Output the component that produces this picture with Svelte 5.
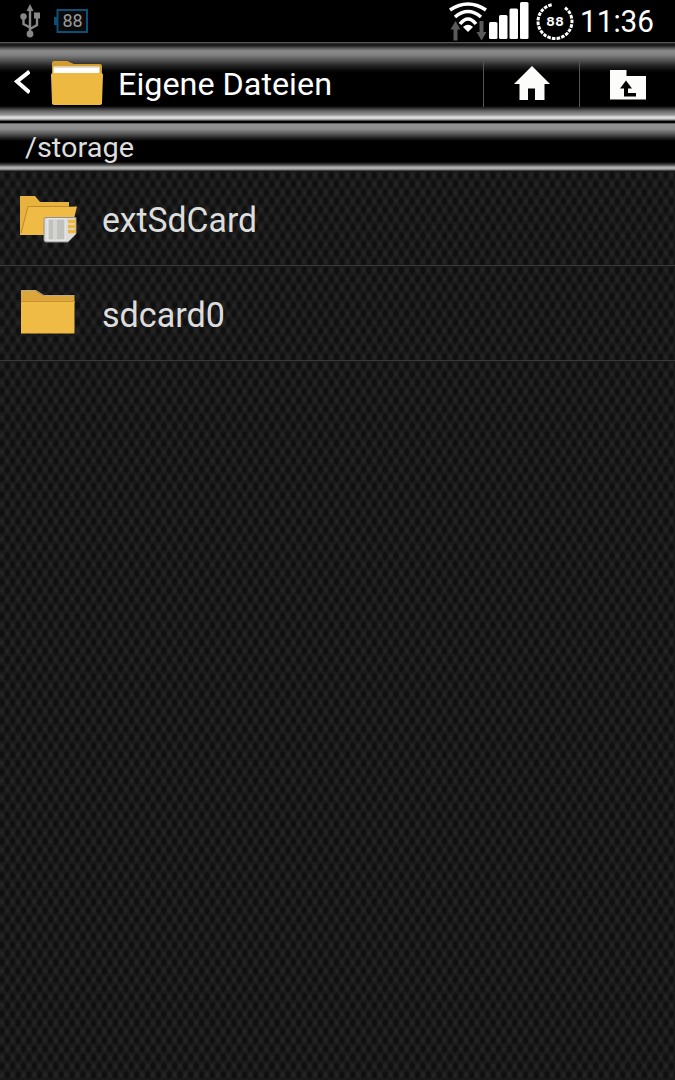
<script lang="ts">
	const path = '/storage';
	const time = '11:36';
	const battery = 88;

	const entries = [
		{ name: 'extSdCard', kind: 'external' },
		{ name: 'sdcard0', kind: 'folder' }
	];

	// 20 dashes, then the open gap at the top right of the ring
	const ringDashes = Array(19).fill('3.3 1.1').join(' ') + ' 3.3 13.1';
</script>

<div class="screen">
	<div class="status-bar">
		<svg class="usb" width="20" height="34" viewBox="0 0 20 34" aria-hidden="true">
			<g fill="none" stroke="#888" stroke-width="2.400">
				<path d="M10 7v23M10 23.500l-6.500-3.500v-7M10 25l7-4v-7" />
			</g>
			<g fill="#888">
				<path d="M10 0l3.500 7h-7z" />
				<circle cx="3.500" cy="12.500" r="3.200" />
				<rect x="14" y="8.500" width="6" height="6" />
				<circle cx="10" cy="30" r="3.400" />
			</g>
		</svg>
		<svg class="cell" width="34" height="24" viewBox="0 0 34 24" aria-hidden="true">
			<rect x="3.500" y="1" width="29.500" height="22" fill="#0a0a0a" stroke="#0c4e76" stroke-width="2" />
			<rect y="8" width="3" height="8" fill="#0c4e76" />
			<text x="18.500" y="18" text-anchor="middle" textLength="20">{battery}</text>
		</svg>

		<div class="status-right">
			<svg width="38" height="42" viewBox="0 0 38 42" aria-hidden="true">
				<g fill="none" stroke="#fff" stroke-width="3.600">
					<path d="M1 10q18-12 36 0" />
					<path d="M6 17q13-11 26 0" />
					<path d="M11 24q8-10 16 0" />
				</g>
				<path d="M14 27q5-4.500 10 0L19 32z" fill="#fff" />
				<path d="M6.500 21l5 8.500H8.500V40.500h-4V29.500h-3z" fill="#5a5a5a" />
				<path d="M32.500 40.500l-5-8.500h3V21h4v11h3z" fill="#5a5a5a" />
			</svg>
			<svg width="40" height="42" viewBox="0 0 40 42" fill="#fff" aria-hidden="true">
				<rect x="0" y="22" width="8.500" height="17" rx="1.500" />
				<rect x="10" y="15" width="8.500" height="24" rx="1.500" />
				<rect x="20.500" y="8.500" width="8.500" height="30.500" rx="1.500" />
				<rect x="31" y="2" width="8.500" height="37" rx="1.500" />
			</svg>
			<svg class="ring" width="38" height="42" viewBox="0 0 38 42" aria-hidden="true">
				<circle
					cx="19"
					cy="21.500"
					r="17"
					fill="none"
					stroke="#fff"
					stroke-width="3"
					pathLength="100"
					stroke-dasharray={ringDashes}
					transform="rotate(-54 19 21.500)"
				/>
				<text x="19" y="25.500" text-anchor="middle" textLength="18" lengthAdjust="spacingAndGlyphs">{battery}</text>
			</svg>
			<svg class="clock" width="76" height="42" viewBox="0 0 76 42">
				<text x="0" y="31.500" textLength="74" lengthAdjust="spacingAndGlyphs">{time}</text>
			</svg>
		</div>
	</div>

	<header class="title-bar">
		<button class="back" type="button" aria-label="Zurück">
			<svg width="16" height="26" viewBox="0 0 16 26" fill="none" stroke="#fff" stroke-width="4">
				<path d="M15.500 2.500L3 12.500 15.500 23.500" />
			</svg>
		</button>
		<svg class="app-icon" width="54" height="46" viewBox="0 0 54 46" aria-hidden="true">
			<path d="M2 44V3q0-2 2-2h13l7 3h26q2 0 2 2v38z" fill="#d39c2e" />
			<rect x="3.500" y="6.500" width="46" height="10" fill="#fff" />
			<path d="M3.500 7.500h46" stroke="#ddd" />
			<path d="M1 15q0-2 2-2h48q2 0 2 2l-1 28q0 2-2 2H4q-2 0-2-2z" fill="#edb941" />
		</svg>
		<svg class="title" width="220" height="44" viewBox="0 0 220 44">
			<text x="0" y="31.500" textLength="214" lengthAdjust="spacingAndGlyphs">Eigene Dateien</text>
		</svg>
		<button class="action" type="button" aria-label="Home">
			<svg width="38" height="36" viewBox="0 0 38 36" fill="#fcfcfa">
				<path d="M19 1L37 19H31.500V35H22V23.500H15V35H6.500V19H1z" />
			</svg>
		</button>
		<button class="action" type="button" aria-label="Up">
			<svg width="38" height="30" viewBox="0 0 38 30">
				<path d="M1 0h16.500v6H37v23.500H1z" fill="#fcfcfa" />
				<path d="M17 10.500l6 8h-4V23h8v3.500H15v-8h-4z" fill="#000" />
			</svg>
		</button>
	</header>

	<div class="path-bar">
		<svg width="120" height="46" viewBox="0 0 120 46">
			<text x="0" y="36" textLength="109" lengthAdjust="spacingAndGlyphs">{path}</text>
		</svg>
	</div>

	<ul class="files">
		{#each entries as entry (entry.name)}
			<li>
				{#if entry.kind === 'external'}
					<svg width="60" height="50" viewBox="0 0 60 50" aria-hidden="true">
						<path d="M0 40V1h15l5 6h29v33z" fill="#e8b23e" />
						<path d="M1 40L8 12h31l18-.5L50 40z" fill="#efbb44" />
						<path d="M1 38L8 11.500h41" fill="none" stroke="#bd8b2a" />
						<path d="M26 22.500h30V39l-8 8H26q-2 0-2-2V24.500q0-2 2-2z" fill="#dcdcdc" stroke="#909090" />
						<rect x="28" y="24" width="17" height="21" fill="#c0c0bc" stroke="#eee" />
						<path d="M35 25v19" stroke="#d4d4d0" stroke-width="4" />
						<path d="M48 26.500h8M48 31.500h8M48 36.500h8" stroke="#efb63c" stroke-width="3.500" />
					</svg>
				{:else}
					<svg width="60" height="50" viewBox="0 0 60 50" aria-hidden="true">
						<path d="M1 12V1h15l8 5h30.500v7z" fill="#dca63a" />
						<path d="M1 .5h15l8 5h30.500" fill="none" stroke="#b8a98a" />
						<rect x="1" y="11.500" width="53.500" height="32" fill="#efbb44" />
						<path d="M1 11.500h53.500" stroke="#c4922f" />
					</svg>
				{/if}
				<svg class="name" width="200" height="50" viewBox="0 0 200 50">
					<text
						x="0"
						y="35"
						textLength={entry.kind === 'external' ? 155 : 123}
						lengthAdjust="spacingAndGlyphs">{entry.name}</text
					>
				</svg>
			</li>
		{/each}
	</ul>
</div>

<style>
	:global(body) {
		background: #000;
	}

	.screen {
		height: 1080px;
		display: flex;
		flex-direction: column;
		overflow: hidden;
		font-family: Roboto, sans-serif;
		background: #000;
	}

	svg {
		display: block;
		flex-shrink: 0;
	}

	/* Status bar */
	.status-bar {
		height: 42px;
		display: flex;
		align-items: flex-start;
		padding: 0 19px 0 20px;
	}
	.usb {
		margin-top: 4px;
	}
	.cell {
		margin: 9px 0 0 14px;
	}
	.cell text {
		font: 18px Roboto, sans-serif;
		fill: #999;
	}
	.status-right {
		display: flex;
		margin-left: auto;
	}
	.status-right svg + svg {
		margin-left: 2px;
	}
	.status-right .ring {
		margin-left: 7px;
	}
	.status-right .clock {
		margin-left: 6px;
	}
	.ring text {
		font: 700 13px 'DejaVu Sans Mono', monospace;
		fill: #fff;
	}
	.clock text {
		font: 31px Roboto, sans-serif;
		fill: #fff;
	}

	/* Title bar */
	.title-bar {
		height: 79px;
		box-sizing: border-box;
		display: flex;
		align-items: flex-start;
		background: linear-gradient(
			#666 0,
			#444 1px,
			#111 2px,
			#222 4px,
			#555 6px,
			#8c8c8c 9px,
			#808080 13px,
			#555 18px,
			#222 24px,
			#000 30px,
			#000 64px,
			#666 69px,
			#999 73px,
			#ddd 75px,
			#ccc 77px,
			#222 79px
		);
	}
	button {
		padding: 0;
		border: none;
		background: none;
		cursor: pointer;
	}
	.back {
		margin: 27px 0 0 14px;
	}
	.app-icon {
		margin: 18px 0 0 20px;
	}
	.title {
		margin: 21px auto 0 14px;
	}
	.title text {
		font: 31px Roboto, sans-serif;
		fill: #fff;
	}
	.action {
		width: 96px;
		height: 48px;
		box-sizing: border-box;
		margin-top: 17px;
		display: flex;
		align-items: center;
		justify-content: center;
		border-left: 1px solid #555;
	}
	.action:last-child svg {
		margin-top: 3px;
	}

	/* Path bar */
	.path-bar {
		height: 50px;
		flex-shrink: 0;
		box-sizing: border-box;
		padding-left: 25px;
		background: linear-gradient(
			#000 0,
			#000 1.500px,
			#929292 3px,
			#8c8c8c 8px,
			#555 13px,
			#222 17px,
			#000 20px,
			#000 41px,
			#333 43px,
			#777 45px,
			#b0b0b0 46px,
			#aaa 48px,
			#222 50px
		);
	}
	.path-bar text {
		font: 28px Roboto, sans-serif;
		fill: #ddd;
	}

	/* File list on a woven backdrop: dark and light cells in alternating rows */
	.files {
		flex: 1;
		margin: 0;
		padding: 0;
		list-style: none;
		background-color: #1a1a1a;
		background-image:
			radial-gradient(ellipse 3px 4.500px at 50% 50%, #0f0f0f 65%, transparent),
			radial-gradient(ellipse 3px 4.500px at 50% 50%, #0f0f0f 65%, transparent),
			radial-gradient(ellipse 3px 4px at 50% 50%, #262626 20%, transparent),
			radial-gradient(ellipse 3px 4px at 50% 50%, #262626 20%, transparent);
		background-size: 10.800px 17.300px;
		background-position:
			-3.500px 4.350px,
			1.900px -4.300px,
			1.900px 4.350px,
			-3.500px -4.300px;
	}
	.files li {
		height: 95px;
		box-sizing: border-box;
		display: flex;
		align-items: flex-start;
		padding: 24px 0 0 20px;
		border-bottom: 1px solid #383838;
	}
	.files .name {
		margin-left: 22px;
		margin-top: 2px;
	}
	.name text {
		font: 35px Roboto, sans-serif;
		fill: #ddd;
	}
</style>
